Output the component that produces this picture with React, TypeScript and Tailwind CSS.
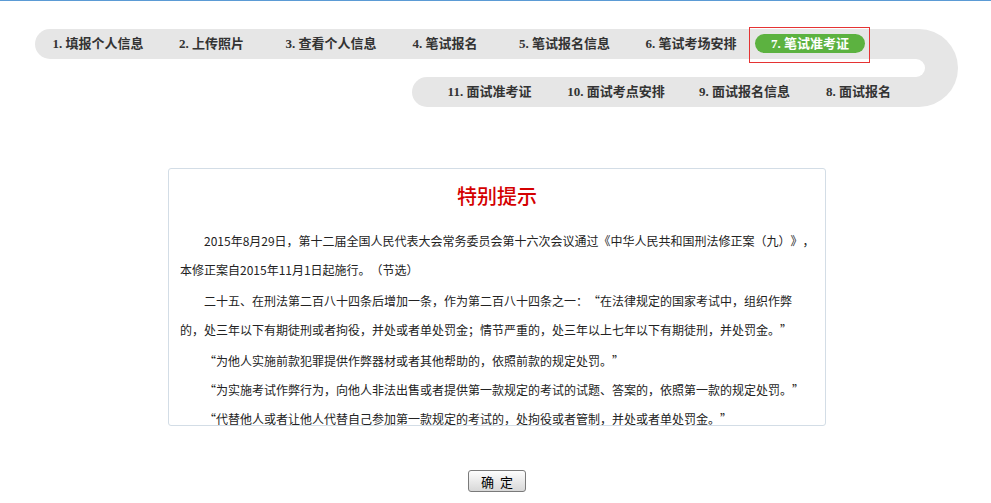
import React from "react";

const navFont = { fontFamily: '"Liberation Serif", "Noto Sans CJK SC", serif' };

function Cell({ w, children }: { w: string; children: React.ReactNode }) {
  return (
    <div className={`${w} h-[30px] flex items-center justify-center whitespace-nowrap`}>
      {children}
    </div>
  );
}

export default function App() {
  return (
    <div className="w-[991px] h-[503px] bg-white overflow-hidden" style={{ fontFamily: '"Noto Sans CJK SC", sans-serif' }}>
      <div className="h-px bg-[#5b9bd5]" />

      {/* step navigation */}
      <div
        className="mt-[28px] ml-[35px] w-[923px] flex text-[13px] font-bold text-[#333]"
        style={navFont}
      >
        <div className="w-[881px] flex flex-col">
          <div className="h-[30px] bg-[#e6e6e6] rounded-l-[15px] flex items-start">
            <div className="w-[6px]" />
            <Cell w="w-[114px]">1. 填报个人信息</Cell>
            <Cell w="w-[113px]">2. 上传照片</Cell>
            <Cell w="w-[126px]">3. 查看个人信息</Cell>
            <Cell w="w-[102px]">4. 笔试报名</Cell>
            <Cell w="w-[137px]">5. 笔试报名信息</Cell>
            <Cell w="w-[116px]">6. 笔试考场安排</Cell>
            <div className="-mt-[2px] w-[121px] h-[36px] border border-[#e53333] pl-[5px] pt-[6px]">
              <div className="w-[110px] h-[19px] rounded-full bg-[#5cb240] text-white flex items-center justify-center whitespace-nowrap">
                7. 笔试准考证
              </div>
            </div>
          </div>
          <div className="h-[18px]" />
          <div className="ml-[377px] h-[30px] bg-[#e6e6e6] rounded-l-[15px] flex">
            <Cell w="w-[155px]">11. 面试准考证</Cell>
            <Cell w="w-[98px]">10. 面试考点安排</Cell>
            <Cell w="w-[159px]">9. 面试报名信息</Cell>
            <Cell w="w-[69px]">8. 面试报名</Cell>
          </div>
        </div>
        <div className="relative w-[42px] h-[78px] bg-[#e6e6e6] rounded-r-[39px]">
          <div className="absolute left-0 top-[30px] w-[9px] h-[18px] bg-white rounded-r-[9px]" />
        </div>
      </div>

      {/* notice card */}
      <div className="mt-[61px] ml-[168px] w-[658px] h-[258px] border border-[#d3dde6] rounded-[3px] overflow-hidden pt-[13px] pl-[11px]">
        <div className="h-[28px] leading-[28px] text-center text-[20px] font-medium text-[#d40000] pr-[11px]">特别提示</div>
        <div className="mt-[16px] text-[12px] leading-[29px] text-[#222] whitespace-nowrap [text-spacing-trim:space-all]">
          <p className="indent-[24px]">
            2015年8月29日，第十二届全国人民代表大会常务委员会第十六次会议通过《中华人民共和国刑法修正案（九）》，
            <br />
            本修正案自2015年11月1日起施行。（节选）
          </p>
          <p className="indent-[24px] mt-[2px]">
            二十五、在刑法第二百八十四条后增加一条，作为第二百八十四条之一：“在法律规定的国家考试中，组织作弊
            <br />
            的，处三年以下有期徒刑或者拘役，并处或者单处罚金；情节严重的，处三年以上七年以下有期徒刑，并处罚金。”
          </p>
          <p className="indent-[24px] mt-[2px]">“为他人实施前款犯罪提供作弊器材或者其他帮助的，依照前款的规定处罚。”</p>
          <p className="indent-[24px]">“为实施考试作弊行为，向他人非法出售或者提供第一款规定的考试的试题、答案的，依照第一款的规定处罚。”</p>
          <p className="indent-[24px]">“代替他人或者让他人代替自己参加第一款规定的考试的，处拘役或者管制，并处或者单处罚金。”</p>
        </div>
      </div>

      <div className="mt-[44px] ml-[468px]">
        <button className="w-[58px] h-[22px] border border-[#7a7a7a] rounded-[3px] bg-gradient-to-b from-[#fdfdfd] to-[#d8d8d8] text-[13px] text-black flex items-center justify-center leading-none">
          确&nbsp;&nbsp;定
        </button>
      </div>
    </div>
  );
}
